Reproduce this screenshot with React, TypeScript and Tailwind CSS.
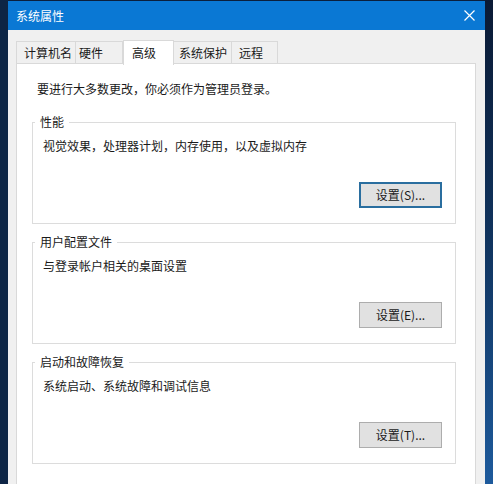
import React from "react";

function Group({ title, desc, btn, focused }: { title: string; desc: string; btn: string; focused?: boolean }) {
  return (
    <fieldset className="w-[424px] border border-[#dcdcdc] pb-[15px] mt-[10px] first-of-type:mt-[17px]">
      <legend className="ml-[2px] px-[5px] text-[#1a1a1a]">{title}</legend>
      <div className="pl-[10px] mt-[8px] text-[#1a1a1a]">{desc}</div>
      <div className="flex justify-end pr-[13px] mt-[28px]">
        <button
          className={
            focused
              ? "w-[83px] h-[26px] bg-[#e1e1e1] border-2 border-[#2a6e9f] text-[#1a1a1a] text-[12px] leading-[16px] flex items-center justify-center"
              : "w-[83px] h-[26px] bg-[#e1e1e1] border border-[#adadad] text-[#1a1a1a] text-[12px] leading-[16px] flex items-center justify-center"
          }
        >
          {btn}
        </button>
      </div>
    </fieldset>
  );
}

export default function App() {
  const tabs = [
    { label: "计算机名", w: "w-[60px]", pl: "pl-[7px]" },
    { label: "硬件", w: "w-[48px]", pl: "pl-[3px]" },
    { label: "高级", w: "w-[51px]", pl: "pl-[8px]", active: true },
    { label: "系统保护", w: "w-[59px]", pl: "pl-[5px]" },
    { label: "远程", w: "w-[47px]", pl: "pl-[7px]" },
  ];
  return (
    <div className="w-[493px] h-[484px] overflow-hidden flex bg-[#0b1f3c] font-['Noto_Sans_CJK_SC','Noto_Sans',sans-serif] text-[12px] leading-[16px]">
      <div className="w-[8px] bg-[#0d2545]" />
      <div className="w-[477px] mt-[1px] flex flex-col">
        <div className="h-[29px] bg-[#0a78d4] flex items-center justify-between pl-[8px] pr-[10px] text-white">
          <span>系统属性</span>
          <svg width="11" height="11" viewBox="0 0 11 11">
            <path d="M0.5 0.5 L10.5 10.5 M10.5 0.5 L0.5 10.5" stroke="white" strokeWidth="1.2" fill="none" />
          </svg>
        </div>
        <div className="flex-1 bg-[#f0f0f0] px-[8px] pt-[10px] flex flex-col">
          <div className="flex items-end h-[25px] relative z-10">
            {tabs.map((t, i) =>
              t.active ? (
                <div
                  key={t.label}
                  className={`${t.w} ${t.pl} h-[25px] bg-white border border-b-0 border-[#d9d9d9] flex items-center text-[#1a1a1a]`}
                >
                  {t.label}
                </div>
              ) : (
                <div
                  key={t.label}
                  className={`${t.w} ${t.pl} ${i === 0 ? "" : "-ml-[1px]"} h-[23px] mb-[1px] bg-[#f0f0f0] border border-[#d9d9d9] flex items-center text-[#1a1a1a]`}
                >
                  {t.label}
                </div>
              )
            )}
          </div>
          <div className="-mt-[2px] w-[460px] flex-1 bg-white border border-b-0 border-[#d9d9d9] pl-[15px] pt-[17px]">
            <div className="pl-[5px] text-[#1a1a1a]">要进行大多数更改，你必须作为管理员登录。</div>
            <Group title="性能" desc="视觉效果，处理器计划，内存使用，以及虚拟内存" btn="设置(S)..." focused />
            <Group title="用户配置文件" desc="与登录帐户相关的桌面设置" btn="设置(E)..." />
            <Group title="启动和故障恢复" desc="系统启动、系统故障和调试信息" btn="设置(T)..." />
          </div>
        </div>
      </div>
      <div className="flex-1 bg-gradient-to-b from-[#0a1a35] via-[#10345f] to-[#1d5a9c]" />
    </div>
  );
}
